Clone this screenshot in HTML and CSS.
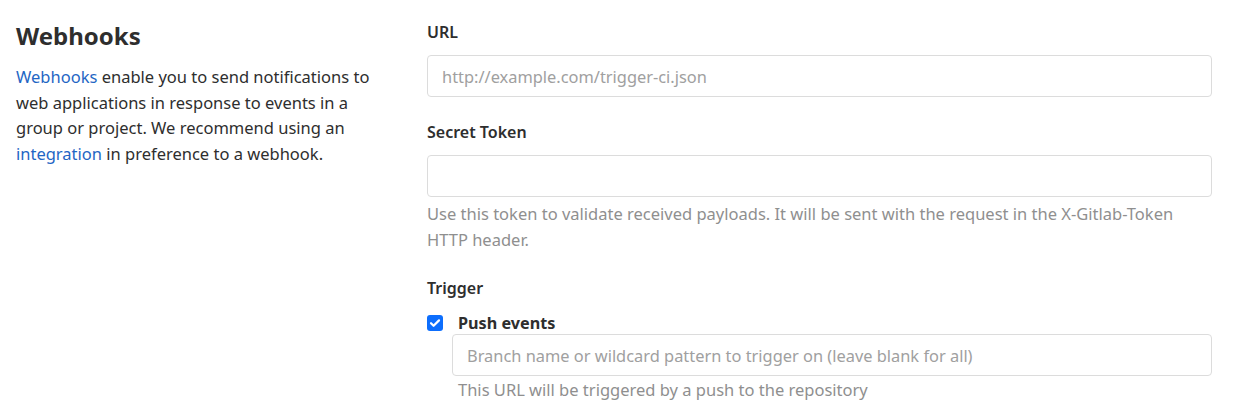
FILE: index.html
```html
<!DOCTYPE html>
<html>
<head>
<meta charset="utf-8">
<link rel="stylesheet" href="styles.css">
</head>
<body>
<div class="page">
  <div class="side">
    <h2 class="title">Webhooks</h2>
    <p class="desc"><a href="#">Webhooks</a> enable you to send notifications to web applications in response to events in a group or project. We recommend using an <a href="#">integration</a> in preference to a webhook.</p>
  </div>
  <div class="form">
    <div class="group">
      <label class="label">URL</label>
      <input class="input" type="text" placeholder="http://example.com/trigger-ci.json">
    </div>
    <div class="group">
      <label class="label">Secret Token</label>
      <input class="input" type="text">
      <p class="help">Use this token to validate received payloads. It will be sent with the request in the X-Gitlab-Token HTTP header.</p>
    </div>
    <div class="group">
      <label class="label">Trigger</label>
      <div class="check-row">
        <span class="checkbox"><svg width="16" height="16" viewBox="0 0 16 16"><path d="M4 8.2l2.6 2.6L12 5.4" fill="none" stroke="#fff" stroke-width="2.2" stroke-linecap="round" stroke-linejoin="round"/></svg></span>
        <span class="check-label">Push events</span>
      </div>
      <div class="sub">
        <input class="input" type="text" placeholder="Branch name or wildcard pattern to trigger on (leave blank for all)">
        <p class="help sub-help">This URL will be triggered by a push to the repository</p>
      </div>
    </div>
  </div>
</div>
</body>
</html>
```

FILE: styles.css
```css
* { box-sizing: border-box; }
html, body { margin: 0; padding: 0; background: #fff; }
body {
  font-family: "Noto Sans", "Open Sans", sans-serif;
  font-size: 16.5px;
  color: #2e2e2e;
}
.page {
  display: flex;
  padding: 0 22px 0 16px;
}
.side {
  width: 370px;
  flex: none;
  margin-right: 41px;
}
.title {
  margin: 18px 0 0;
  font-size: 24px;
  font-weight: 700;
  line-height: 36px;
  color: #2e2e2e;
}
.desc {
  margin: 10px 0 0;
  line-height: 25.7px;
  font-size: 16.5px;
}
.desc a { color: #1f66c4; text-decoration: none; }
.form {
  flex: 1;
  padding-top: 18px;
}
.group { margin-bottom: 21px; }
.label {
  display: block;
  font-weight: 600;
  font-size: 16px;
  line-height: 28px;
  margin-bottom: 9px;
}
.input {
  display: block;
  width: 100%;
  height: 42px;
  border: 1px solid #dcdcdc;
  border-radius: 4px;
  padding: 0 14px;
  font-family: inherit;
  font-size: 16.4px;
  color: #2e2e2e;
  background: #fff;
  outline: none;
}
.input::placeholder { color: #a0a0a0; }
.help {
  margin: 4px 0 0;
  color: #8f8f8f;
  font-size: 16.5px;
  line-height: 26px;
}
.check-row {
  display: flex;
  align-items: center;
  height: 20px;
  margin-top: 11px;
}
.checkbox {
  width: 16px;
  height: 16px;
  border-radius: 3px;
  background: #0d6efd;
  display: inline-flex;
  margin-right: 15px;
}
.check-label {
  font-weight: 700;
  font-size: 16.2px;
}
.sub {
  padding-left: 25px;
  margin-top: 1px;
}
.sub-help { margin-top: 1px; padding-left: 6px; }
```
